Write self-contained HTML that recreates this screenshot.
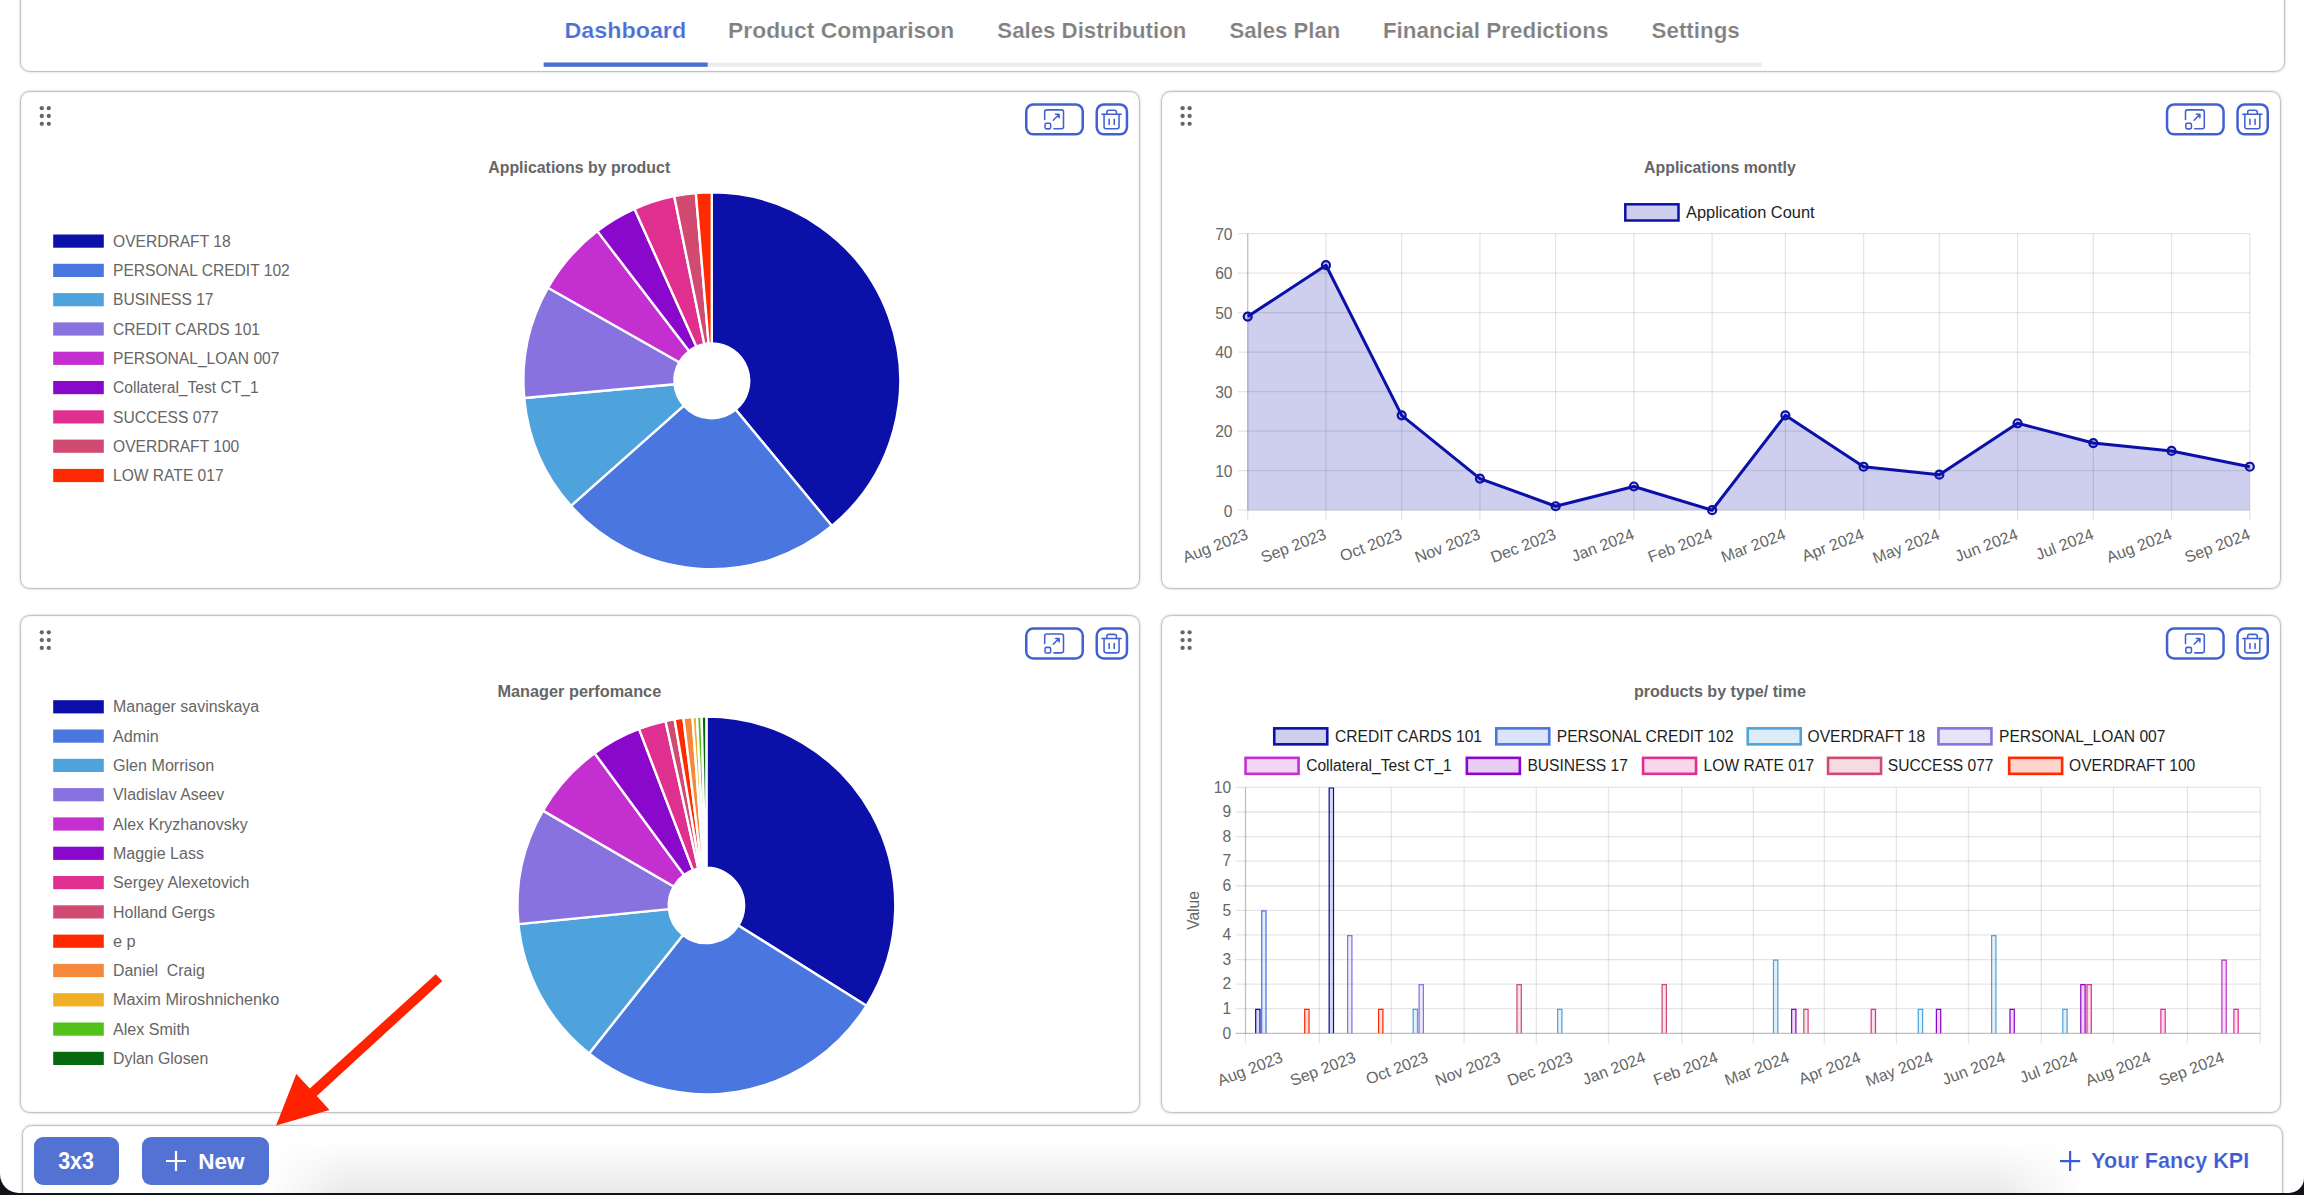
<!DOCTYPE html>
<html><head><meta charset="utf-8"><title>Dashboard</title>
<style>
html,body{margin:0;padding:0;}
body{width:2304px;height:1195px;overflow:hidden;background:#111318;position:relative;font-family:"Liberation Sans", sans-serif;}
.page{position:absolute;left:0;top:0;width:2304px;height:1193.3px;background:#fff;border-radius:0 0 15px 19px;overflow:hidden;}
.panel{position:absolute;box-sizing:border-box;border:1px solid #c2c2c2;border-radius:9.5px;box-shadow:0 0 3px rgba(0,0,0,0.2),inset 0 0 1.5px rgba(0,0,0,0.15);background:transparent;}
.shade{position:absolute;left:0;top:1140px;width:2304px;height:53px;background:linear-gradient(to bottom,rgba(0,0,0,0),rgba(0,0,0,0.085));
 -webkit-mask-image:linear-gradient(to right,transparent 11.5%,#000 15%,#000 86.5%,transparent 90.5%);}
.btn{position:absolute;top:1137.3px;height:47.4px;background:rgb(84,114,211);border-radius:9px;color:#fff;font-weight:700;font-size:22px;}
svg.layer{position:absolute;left:0;top:0;}
</style></head><body>
<div class="page">
<div class="shade"></div>
<div class="panel" style="left:20px;top:-30px;width:2265px;height:102px"></div><div class="panel" style="left:20px;top:91px;width:1120px;height:498px"></div><div class="panel" style="left:1161px;top:91px;width:1120px;height:498px"></div><div class="panel" style="left:20px;top:615px;width:1120px;height:498px"></div><div class="panel" style="left:1161px;top:615px;width:1120px;height:498px"></div><div class="panel" style="left:22px;top:1125px;width:2261px;height:116px"></div>
<div class="btn" style="left:34.2px;width:84.4px"></div>
<div class="btn" style="left:142px;width:126.8px"></div>
<svg class="layer" width="2304" height="1195" viewBox="0 0 2304 1195" font-family='"Liberation Sans", sans-serif'>
<text x="564.4" y="38.3" font-size="22.5" font-weight="700" fill="rgb(74,111,216)" stroke="#fff" stroke-width="0.2" textLength="121.8" lengthAdjust="spacingAndGlyphs">Dashboard</text>
<text x="728" y="38.3" font-size="22.5" font-weight="700" fill="rgb(128,128,128)" stroke="#fff" stroke-width="0.2" textLength="226.3" lengthAdjust="spacingAndGlyphs">Product Comparison</text>
<text x="997.3" y="38.3" font-size="22.5" font-weight="700" fill="rgb(128,128,128)" stroke="#fff" stroke-width="0.2" textLength="189.1" lengthAdjust="spacingAndGlyphs">Sales Distribution</text>
<text x="1229.4" y="38.3" font-size="22.5" font-weight="700" fill="rgb(128,128,128)" stroke="#fff" stroke-width="0.2" textLength="110.9" lengthAdjust="spacingAndGlyphs">Sales Plan</text>
<text x="1382.9" y="38.3" font-size="22.5" font-weight="700" fill="rgb(128,128,128)" stroke="#fff" stroke-width="0.2" textLength="225.5" lengthAdjust="spacingAndGlyphs">Financial Predictions</text>
<text x="1651.6" y="38.3" font-size="22.5" font-weight="700" fill="rgb(128,128,128)" stroke="#fff" stroke-width="0.2" textLength="88.1" lengthAdjust="spacingAndGlyphs">Settings</text>
<rect x="543.7" y="62.7" width="1218" height="4" fill="#ebebeb"/>
<rect x="543.7" y="62.5" width="164" height="4.3" fill="rgb(74,111,216)"/>
<circle cx="41.8" cy="108.2" r="2.15" fill="#666"/>
<circle cx="41.8" cy="116" r="2.15" fill="#666"/>
<circle cx="41.8" cy="123.8" r="2.15" fill="#666"/>
<circle cx="48.8" cy="108.2" r="2.15" fill="#666"/>
<circle cx="48.8" cy="116" r="2.15" fill="#666"/>
<circle cx="48.8" cy="123.8" r="2.15" fill="#666"/>
<circle cx="1182.6" cy="108.2" r="2.15" fill="#666"/>
<circle cx="1182.6" cy="116" r="2.15" fill="#666"/>
<circle cx="1182.6" cy="123.8" r="2.15" fill="#666"/>
<circle cx="1189.6" cy="108.2" r="2.15" fill="#666"/>
<circle cx="1189.6" cy="116" r="2.15" fill="#666"/>
<circle cx="1189.6" cy="123.8" r="2.15" fill="#666"/>
<circle cx="41.8" cy="632.3" r="2.15" fill="#666"/>
<circle cx="41.8" cy="640.1" r="2.15" fill="#666"/>
<circle cx="41.8" cy="647.9" r="2.15" fill="#666"/>
<circle cx="48.8" cy="632.3" r="2.15" fill="#666"/>
<circle cx="48.8" cy="640.1" r="2.15" fill="#666"/>
<circle cx="48.8" cy="647.9" r="2.15" fill="#666"/>
<circle cx="1182.6" cy="632.3" r="2.15" fill="#666"/>
<circle cx="1182.6" cy="640.1" r="2.15" fill="#666"/>
<circle cx="1182.6" cy="647.9" r="2.15" fill="#666"/>
<circle cx="1189.6" cy="632.3" r="2.15" fill="#666"/>
<circle cx="1189.6" cy="640.1" r="2.15" fill="#666"/>
<circle cx="1189.6" cy="647.9" r="2.15" fill="#666"/>
<rect x="1096.75" y="104.45" width="30.2" height="29.9" rx="7" fill="none" stroke="rgb(66,97,209)" stroke-width="2.5"/>
<rect x="1026.25" y="104.45" width="56.5" height="29.9" rx="7" fill="none" stroke="rgb(66,97,209)" stroke-width="2.5"/>
<g fill="none" stroke="rgb(66,97,209)" stroke-width="1.55" stroke-linecap="round" stroke-linejoin="round"><path d="M1044.7 119.5 V111.85 a2 2 0 0 1 2 -2 H1061.5 a2 2 0 0 1 2 2 V126.75 a2 2 0 0 1 -2 2 H1053.9"/><rect x="1045.05" y="123.25" width="5.6" height="5.6" rx="1.3"/><path d="M1053.3 120.2 L1058.9 114.5 M1055.6 114.3 H1059.1 V117.8"/></g>
<g fill="none" stroke="rgb(66,97,209)" stroke-width="1.55" stroke-linecap="round" stroke-linejoin="round"><path d="M1101.95 114.3 H1121.15"/><path d="M1104.05 114.3 V126.75 a2 2 0 0 0 2 2 H1117.05 a2 2 0 0 0 2 -2 V114.3"/><path d="M1106.85 114.3 V112.25 a2 2 0 0 1 2 -2 H1114.45 a2 2 0 0 1 2 2 V114.3"/><path d="M1109.15 119.3 V124.4 M1114.25 119.3 V124.4"/></g>
<rect x="2237.55" y="104.45" width="30.2" height="29.9" rx="7" fill="none" stroke="rgb(66,97,209)" stroke-width="2.5"/>
<rect x="2167.05" y="104.45" width="56.5" height="29.9" rx="7" fill="none" stroke="rgb(66,97,209)" stroke-width="2.5"/>
<g fill="none" stroke="rgb(66,97,209)" stroke-width="1.55" stroke-linecap="round" stroke-linejoin="round"><path d="M2185.5 119.5 V111.85 a2 2 0 0 1 2 -2 H2202.3 a2 2 0 0 1 2 2 V126.75 a2 2 0 0 1 -2 2 H2194.7"/><rect x="2185.85" y="123.25" width="5.6" height="5.6" rx="1.3"/><path d="M2194.1 120.2 L2199.7 114.5 M2196.4 114.3 H2199.9 V117.8"/></g>
<g fill="none" stroke="rgb(66,97,209)" stroke-width="1.55" stroke-linecap="round" stroke-linejoin="round"><path d="M2242.75 114.3 H2261.95"/><path d="M2244.85 114.3 V126.75 a2 2 0 0 0 2 2 H2257.85 a2 2 0 0 0 2 -2 V114.3"/><path d="M2247.65 114.3 V112.25 a2 2 0 0 1 2 -2 H2255.25 a2 2 0 0 1 2 2 V114.3"/><path d="M2249.95 119.3 V124.4 M2255.05 119.3 V124.4"/></g>
<rect x="1096.75" y="628.55" width="30.2" height="29.9" rx="7" fill="none" stroke="rgb(66,97,209)" stroke-width="2.5"/>
<rect x="1026.25" y="628.55" width="56.5" height="29.9" rx="7" fill="none" stroke="rgb(66,97,209)" stroke-width="2.5"/>
<g fill="none" stroke="rgb(66,97,209)" stroke-width="1.55" stroke-linecap="round" stroke-linejoin="round"><path d="M1044.7 643.6 V635.95 a2 2 0 0 1 2 -2 H1061.5 a2 2 0 0 1 2 2 V650.85 a2 2 0 0 1 -2 2 H1053.9"/><rect x="1045.05" y="647.35" width="5.6" height="5.6" rx="1.3"/><path d="M1053.3 644.3 L1058.9 638.6 M1055.6 638.4 H1059.1 V641.9"/></g>
<g fill="none" stroke="rgb(66,97,209)" stroke-width="1.55" stroke-linecap="round" stroke-linejoin="round"><path d="M1101.95 638.4 H1121.15"/><path d="M1104.05 638.4 V650.85 a2 2 0 0 0 2 2 H1117.05 a2 2 0 0 0 2 -2 V638.4"/><path d="M1106.85 638.4 V636.35 a2 2 0 0 1 2 -2 H1114.45 a2 2 0 0 1 2 2 V638.4"/><path d="M1109.15 643.4 V648.5 M1114.25 643.4 V648.5"/></g>
<rect x="2237.55" y="628.55" width="30.2" height="29.9" rx="7" fill="none" stroke="rgb(66,97,209)" stroke-width="2.5"/>
<rect x="2167.05" y="628.55" width="56.5" height="29.9" rx="7" fill="none" stroke="rgb(66,97,209)" stroke-width="2.5"/>
<g fill="none" stroke="rgb(66,97,209)" stroke-width="1.55" stroke-linecap="round" stroke-linejoin="round"><path d="M2185.5 643.6 V635.95 a2 2 0 0 1 2 -2 H2202.3 a2 2 0 0 1 2 2 V650.85 a2 2 0 0 1 -2 2 H2194.7"/><rect x="2185.85" y="647.35" width="5.6" height="5.6" rx="1.3"/><path d="M2194.1 644.3 L2199.7 638.6 M2196.4 638.4 H2199.9 V641.9"/></g>
<g fill="none" stroke="rgb(66,97,209)" stroke-width="1.55" stroke-linecap="round" stroke-linejoin="round"><path d="M2242.75 638.4 H2261.95"/><path d="M2244.85 638.4 V650.85 a2 2 0 0 0 2 2 H2257.85 a2 2 0 0 0 2 -2 V638.4"/><path d="M2247.65 638.4 V636.35 a2 2 0 0 1 2 -2 H2255.25 a2 2 0 0 1 2 2 V638.4"/><path d="M2249.95 643.4 V648.5 M2255.05 643.4 V648.5"/></g>
<text x="488.2" y="173" font-size="15.7" font-weight="700" fill="#666" textLength="182" lengthAdjust="spacingAndGlyphs">Applications by product</text>
<text x="1644" y="173" font-size="15.7" font-weight="700" fill="#666" textLength="151.8" lengthAdjust="spacingAndGlyphs">Applications montly</text>
<text x="497.5" y="697.4" font-size="15.7" font-weight="700" fill="#666" textLength="163.7" lengthAdjust="spacingAndGlyphs">Manager perfomance</text>
<text x="1633.9" y="697.4" font-size="15.7" font-weight="700" fill="#666" textLength="172" lengthAdjust="spacingAndGlyphs">products by type/ time</text>
<path d="M711.8 192.4 A188.4 188.4 0 0 1 831.89 525.96 L735.64 409.62 A37.4 37.4 0 0 0 711.8 343.4 Z" fill="rgb(10,16,168)" stroke="#fff" stroke-width="2.4" stroke-linejoin="bevel"/>
<path d="M831.89 525.96 A188.4 188.4 0 0 1 570.91 505.88 L683.83 405.63 A37.4 37.4 0 0 0 735.64 409.62 Z" fill="rgb(74,118,224)" stroke="#fff" stroke-width="2.4" stroke-linejoin="bevel"/>
<path d="M570.91 505.88 A188.4 188.4 0 0 1 524.19 398.04 L674.56 384.22 A37.4 37.4 0 0 0 683.83 405.63 Z" fill="rgb(79,163,220)" stroke="#fff" stroke-width="2.4" stroke-linejoin="bevel"/>
<path d="M524.19 398.04 A188.4 188.4 0 0 1 547.99 287.74 L679.28 362.33 A37.4 37.4 0 0 0 674.56 384.22 Z" fill="rgb(136,114,224)" stroke="#fff" stroke-width="2.4" stroke-linejoin="bevel"/>
<path d="M547.99 287.74 A188.4 188.4 0 0 1 597.37 231.13 L689.08 351.09 A37.4 37.4 0 0 0 679.28 362.33 Z" fill="rgb(195,48,207)" stroke="#fff" stroke-width="2.4" stroke-linejoin="bevel"/>
<path d="M597.37 231.13 A188.4 188.4 0 0 1 634.57 208.96 L696.47 346.69 A37.4 37.4 0 0 0 689.08 351.09 Z" fill="rgb(138,7,204)" stroke="#fff" stroke-width="2.4" stroke-linejoin="bevel"/>
<path d="M634.57 208.96 A188.4 188.4 0 0 1 674.24 196.18 L704.34 344.15 A37.4 37.4 0 0 0 696.47 346.69 Z" fill="rgb(224,48,143)" stroke="#fff" stroke-width="2.4" stroke-linejoin="bevel"/>
<path d="M674.24 196.18 A188.4 188.4 0 0 1 695.87 193.07 L708.64 343.53 A37.4 37.4 0 0 0 704.34 344.15 Z" fill="rgb(209,74,114)" stroke="#fff" stroke-width="2.4" stroke-linejoin="bevel"/>
<path d="M695.87 193.07 A188.4 188.4 0 0 1 711.8 192.4 L711.8 343.4 A37.4 37.4 0 0 0 708.64 343.53 Z" fill="rgb(255,42,0)" stroke="#fff" stroke-width="2.4" stroke-linejoin="bevel"/>
<path d="M706.4 716.5 A188.9 188.9 0 0 1 866.42 1005.78 L738.34 925.43 A37.7 37.7 0 0 0 706.4 867.7 Z" fill="rgb(10,16,168)" stroke="#fff" stroke-width="2.4" stroke-linejoin="bevel"/>
<path d="M866.42 1005.78 A188.9 188.9 0 0 1 589.07 1053.44 L682.98 934.95 A37.7 37.7 0 0 0 738.34 925.43 Z" fill="rgb(74,118,224)" stroke="#fff" stroke-width="2.4" stroke-linejoin="bevel"/>
<path d="M589.07 1053.44 A188.9 188.9 0 0 1 518.43 924.16 L668.89 909.14 A37.7 37.7 0 0 0 682.98 934.95 Z" fill="rgb(79,163,220)" stroke="#fff" stroke-width="2.4" stroke-linejoin="bevel"/>
<path d="M518.43 924.16 A188.9 188.9 0 0 1 542.97 810.66 L673.78 886.49 A37.7 37.7 0 0 0 668.89 909.14 Z" fill="rgb(136,114,224)" stroke="#fff" stroke-width="2.4" stroke-linejoin="bevel"/>
<path d="M542.97 810.66 A188.9 188.9 0 0 1 594.57 753.16 L684.08 875.02 A37.7 37.7 0 0 0 673.78 886.49 Z" fill="rgb(195,48,207)" stroke="#fff" stroke-width="2.4" stroke-linejoin="bevel"/>
<path d="M594.57 753.16 A188.9 188.9 0 0 1 639.01 728.93 L692.95 870.18 A37.7 37.7 0 0 0 684.08 875.02 Z" fill="rgb(138,7,204)" stroke="#fff" stroke-width="2.4" stroke-linejoin="bevel"/>
<path d="M639.01 728.93 A188.9 188.9 0 0 1 665.51 720.98 L698.24 868.59 A37.7 37.7 0 0 0 692.95 870.18 Z" fill="rgb(224,48,143)" stroke="#fff" stroke-width="2.4" stroke-linejoin="bevel"/>
<path d="M665.51 720.98 A188.9 188.9 0 0 1 674.57 719.2 L700.05 868.24 A37.7 37.7 0 0 0 698.24 868.59 Z" fill="rgb(209,74,114)" stroke="#fff" stroke-width="2.4" stroke-linejoin="bevel"/>
<path d="M674.57 719.2 A188.9 188.9 0 0 1 683.38 717.91 L701.81 867.98 A37.7 37.7 0 0 0 700.05 868.24 Z" fill="rgb(255,42,0)" stroke="#fff" stroke-width="2.4" stroke-linejoin="bevel"/>
<path d="M683.38 717.91 A188.9 188.9 0 0 1 692.4 717.02 L703.61 867.8 A37.7 37.7 0 0 0 701.81 867.98 Z" fill="rgb(245,136,58)" stroke="#fff" stroke-width="2.4" stroke-linejoin="bevel"/>
<path d="M692.4 717.02 A188.9 188.9 0 0 1 697.01 716.73 L704.53 867.75 A37.7 37.7 0 0 0 703.61 867.8 Z" fill="rgb(240,176,37)" stroke="#fff" stroke-width="2.4" stroke-linejoin="bevel"/>
<path d="M697.01 716.73 A188.9 188.9 0 0 1 701.62 716.56 L705.45 867.71 A37.7 37.7 0 0 0 704.53 867.75 Z" fill="rgb(82,194,26)" stroke="#fff" stroke-width="2.4" stroke-linejoin="bevel"/>
<path d="M701.62 716.56 A188.9 188.9 0 0 1 706.4 716.5 L706.4 867.7 A37.7 37.7 0 0 0 705.45 867.71 Z" fill="rgb(7,105,15)" stroke="#fff" stroke-width="2.4" stroke-linejoin="bevel"/>
<rect x="53.2" y="234.5" width="50.6" height="13.2" fill="rgb(10,16,168)"/>
<text x="113" y="246.7" font-size="15.6" fill="#666">OVERDRAFT 18</text>
<rect x="53.2" y="263.8" width="50.6" height="13.2" fill="rgb(74,118,224)"/>
<text x="113" y="276" font-size="15.6" fill="#666">PERSONAL CREDIT 102</text>
<rect x="53.2" y="293.1" width="50.6" height="13.2" fill="rgb(79,163,220)"/>
<text x="113" y="305.3" font-size="15.6" fill="#666">BUSINESS 17</text>
<rect x="53.2" y="322.4" width="50.6" height="13.2" fill="rgb(136,114,224)"/>
<text x="113" y="334.6" font-size="15.6" fill="#666">CREDIT CARDS 101</text>
<rect x="53.2" y="351.7" width="50.6" height="13.2" fill="rgb(195,48,207)"/>
<text x="113" y="363.9" font-size="15.6" fill="#666">PERSONAL_LOAN 007</text>
<rect x="53.2" y="381" width="50.6" height="13.2" fill="rgb(138,7,204)"/>
<text x="113" y="393.2" font-size="15.6" fill="#666">Collateral_Test CT_1</text>
<rect x="53.2" y="410.3" width="50.6" height="13.2" fill="rgb(224,48,143)"/>
<text x="113" y="422.5" font-size="15.6" fill="#666">SUCCESS 077</text>
<rect x="53.2" y="439.6" width="50.6" height="13.2" fill="rgb(209,74,114)"/>
<text x="113" y="451.8" font-size="15.6" fill="#666">OVERDRAFT 100</text>
<rect x="53.2" y="468.9" width="50.6" height="13.2" fill="rgb(255,42,0)"/>
<text x="113" y="481.1" font-size="15.6" fill="#666">LOW RATE 017</text>
<rect x="53.2" y="700.2" width="50.6" height="13.2" fill="rgb(10,16,168)"/>
<text x="113" y="712.4" font-size="15.6" fill="#666" textLength="146.2" lengthAdjust="spacingAndGlyphs">Manager savinskaya</text>
<rect x="53.2" y="729.5" width="50.6" height="13.2" fill="rgb(74,118,224)"/>
<text x="113" y="741.7" font-size="15.6" fill="#666" textLength="45.8" lengthAdjust="spacingAndGlyphs">Admin</text>
<rect x="53.2" y="758.8" width="50.6" height="13.2" fill="rgb(79,163,220)"/>
<text x="113" y="771" font-size="15.6" fill="#666" textLength="101.1" lengthAdjust="spacingAndGlyphs">Glen Morrison</text>
<rect x="53.2" y="788.1" width="50.6" height="13.2" fill="rgb(136,114,224)"/>
<text x="113" y="800.3" font-size="15.6" fill="#666" textLength="111.3" lengthAdjust="spacingAndGlyphs">Vladislav Aseev</text>
<rect x="53.2" y="817.4" width="50.6" height="13.2" fill="rgb(195,48,207)"/>
<text x="113" y="829.6" font-size="15.6" fill="#666" textLength="134.6" lengthAdjust="spacingAndGlyphs">Alex Kryzhanovsky</text>
<rect x="53.2" y="846.7" width="50.6" height="13.2" fill="rgb(138,7,204)"/>
<text x="113" y="858.9" font-size="15.6" fill="#666" textLength="91" lengthAdjust="spacingAndGlyphs">Maggie Lass</text>
<rect x="53.2" y="876" width="50.6" height="13.2" fill="rgb(224,48,143)"/>
<text x="113" y="888.2" font-size="15.6" fill="#666" textLength="136.5" lengthAdjust="spacingAndGlyphs">Sergey Alexetovich</text>
<rect x="53.2" y="905.3" width="50.6" height="13.2" fill="rgb(209,74,114)"/>
<text x="113" y="917.5" font-size="15.6" fill="#666" textLength="101.9" lengthAdjust="spacingAndGlyphs">Holland Gergs</text>
<rect x="53.2" y="934.6" width="50.6" height="13.2" fill="rgb(255,42,0)"/>
<text x="113" y="946.8" font-size="15.6" fill="#666" textLength="22.7" lengthAdjust="spacingAndGlyphs">e p</text>
<rect x="53.2" y="963.9" width="50.6" height="13.2" fill="rgb(245,136,58)"/>
<text x="113" y="976.1" font-size="15.6" fill="#666" textLength="91.8" lengthAdjust="spacingAndGlyphs">Daniel&#160; Craig</text>
<rect x="53.2" y="993.2" width="50.6" height="13.2" fill="rgb(240,176,37)"/>
<text x="113" y="1005.4" font-size="15.6" fill="#666" textLength="166.3" lengthAdjust="spacingAndGlyphs">Maxim Miroshnichenko</text>
<rect x="53.2" y="1022.5" width="50.6" height="13.2" fill="rgb(82,194,26)"/>
<text x="113" y="1034.7" font-size="15.6" fill="#666" textLength="76.8" lengthAdjust="spacingAndGlyphs">Alex Smith</text>
<rect x="53.2" y="1051.8" width="50.6" height="13.2" fill="rgb(7,105,15)"/>
<text x="113" y="1064" font-size="15.6" fill="#666" textLength="95.2" lengthAdjust="spacingAndGlyphs">Dylan Glosen</text>
<line x1="1237.7" y1="510.2" x2="2249.8" y2="510.2" stroke="rgba(0,0,0,0.1)" stroke-width="1.3"/>
<text x="1232.5" y="516.5" font-size="15.6" fill="#666" text-anchor="end">0</text>
<line x1="1237.7" y1="470.69" x2="2249.8" y2="470.69" stroke="rgba(0,0,0,0.1)" stroke-width="1.3"/>
<text x="1232.5" y="476.99" font-size="15.6" fill="#666" text-anchor="end">10</text>
<line x1="1237.7" y1="431.17" x2="2249.8" y2="431.17" stroke="rgba(0,0,0,0.1)" stroke-width="1.3"/>
<text x="1232.5" y="437.47" font-size="15.6" fill="#666" text-anchor="end">20</text>
<line x1="1237.7" y1="391.66" x2="2249.8" y2="391.66" stroke="rgba(0,0,0,0.1)" stroke-width="1.3"/>
<text x="1232.5" y="397.96" font-size="15.6" fill="#666" text-anchor="end">30</text>
<line x1="1237.7" y1="352.14" x2="2249.8" y2="352.14" stroke="rgba(0,0,0,0.1)" stroke-width="1.3"/>
<text x="1232.5" y="358.44" font-size="15.6" fill="#666" text-anchor="end">40</text>
<line x1="1237.7" y1="312.63" x2="2249.8" y2="312.63" stroke="rgba(0,0,0,0.1)" stroke-width="1.3"/>
<text x="1232.5" y="318.93" font-size="15.6" fill="#666" text-anchor="end">50</text>
<line x1="1237.7" y1="273.11" x2="2249.8" y2="273.11" stroke="rgba(0,0,0,0.1)" stroke-width="1.3"/>
<text x="1232.5" y="279.41" font-size="15.6" fill="#666" text-anchor="end">60</text>
<line x1="1237.7" y1="233.6" x2="2249.8" y2="233.6" stroke="rgba(0,0,0,0.1)" stroke-width="1.3"/>
<text x="1232.5" y="239.9" font-size="15.6" fill="#666" text-anchor="end">70</text>
<line x1="1247.7" y1="233.6" x2="1247.7" y2="520.2" stroke="rgba(0,0,0,0.1)" stroke-width="1.3"/>
<text x="1249.2" y="538.5" font-size="16" fill="#666" text-anchor="end" transform="rotate(-21 1249.2 538.5)">Aug 2023</text>
<line x1="1325.95" y1="233.6" x2="1325.95" y2="520.2" stroke="rgba(0,0,0,0.1)" stroke-width="1.3"/>
<text x="1327.45" y="538.5" font-size="16" fill="#666" text-anchor="end" transform="rotate(-21 1327.45 538.5)">Sep 2023</text>
<line x1="1401.68" y1="233.6" x2="1401.68" y2="520.2" stroke="rgba(0,0,0,0.1)" stroke-width="1.3"/>
<text x="1403.18" y="538.5" font-size="16" fill="#666" text-anchor="end" transform="rotate(-21 1403.18 538.5)">Oct 2023</text>
<line x1="1479.92" y1="233.6" x2="1479.92" y2="520.2" stroke="rgba(0,0,0,0.1)" stroke-width="1.3"/>
<text x="1481.42" y="538.5" font-size="16" fill="#666" text-anchor="end" transform="rotate(-21 1481.42 538.5)">Nov 2023</text>
<line x1="1555.65" y1="233.6" x2="1555.65" y2="520.2" stroke="rgba(0,0,0,0.1)" stroke-width="1.3"/>
<text x="1557.15" y="538.5" font-size="16" fill="#666" text-anchor="end" transform="rotate(-21 1557.15 538.5)">Dec 2023</text>
<line x1="1633.9" y1="233.6" x2="1633.9" y2="520.2" stroke="rgba(0,0,0,0.1)" stroke-width="1.3"/>
<text x="1635.4" y="538.5" font-size="16" fill="#666" text-anchor="end" transform="rotate(-21 1635.4 538.5)">Jan 2024</text>
<line x1="1712.15" y1="233.6" x2="1712.15" y2="520.2" stroke="rgba(0,0,0,0.1)" stroke-width="1.3"/>
<text x="1713.65" y="538.5" font-size="16" fill="#666" text-anchor="end" transform="rotate(-21 1713.65 538.5)">Feb 2024</text>
<line x1="1785.35" y1="233.6" x2="1785.35" y2="520.2" stroke="rgba(0,0,0,0.1)" stroke-width="1.3"/>
<text x="1786.85" y="538.5" font-size="16" fill="#666" text-anchor="end" transform="rotate(-21 1786.85 538.5)">Mar 2024</text>
<line x1="1863.6" y1="233.6" x2="1863.6" y2="520.2" stroke="rgba(0,0,0,0.1)" stroke-width="1.3"/>
<text x="1865.1" y="538.5" font-size="16" fill="#666" text-anchor="end" transform="rotate(-21 1865.1 538.5)">Apr 2024</text>
<line x1="1939.33" y1="233.6" x2="1939.33" y2="520.2" stroke="rgba(0,0,0,0.1)" stroke-width="1.3"/>
<text x="1940.83" y="538.5" font-size="16" fill="#666" text-anchor="end" transform="rotate(-21 1940.83 538.5)">May 2024</text>
<line x1="2017.58" y1="233.6" x2="2017.58" y2="520.2" stroke="rgba(0,0,0,0.1)" stroke-width="1.3"/>
<text x="2019.08" y="538.5" font-size="16" fill="#666" text-anchor="end" transform="rotate(-21 2019.08 538.5)">Jun 2024</text>
<line x1="2093.3" y1="233.6" x2="2093.3" y2="520.2" stroke="rgba(0,0,0,0.1)" stroke-width="1.3"/>
<text x="2094.8" y="538.5" font-size="16" fill="#666" text-anchor="end" transform="rotate(-21 2094.8 538.5)">Jul 2024</text>
<line x1="2171.55" y1="233.6" x2="2171.55" y2="520.2" stroke="rgba(0,0,0,0.1)" stroke-width="1.3"/>
<text x="2173.05" y="538.5" font-size="16" fill="#666" text-anchor="end" transform="rotate(-21 2173.05 538.5)">Aug 2024</text>
<line x1="2249.8" y1="233.6" x2="2249.8" y2="520.2" stroke="rgba(0,0,0,0.1)" stroke-width="1.3"/>
<text x="2251.3" y="538.5" font-size="16" fill="#666" text-anchor="end" transform="rotate(-21 2251.3 538.5)">Sep 2024</text>
<path d="M1247.7 316.58 L1325.95 265.21 L1401.68 415.37 L1479.92 478.59 L1555.65 506.25 L1633.9 486.49 L1712.15 510.2 L1785.35 415.37 L1863.6 466.73 L1939.33 474.64 L2017.58 423.27 L2093.3 443.03 L2171.55 450.93 L2249.8 466.73 L2249.8 510.2 L1247.7 510.2 Z" fill="rgba(10,16,168,0.2)"/>
<line x1="1247.7" y1="233.6" x2="1247.7" y2="510.2" stroke="rgba(0,0,0,0.16)" stroke-width="1.3"/>
<polyline points="1247.7,316.58 1325.95,265.21 1401.68,415.37 1479.92,478.59 1555.65,506.25 1633.9,486.49 1712.15,510.2 1785.35,415.37 1863.6,466.73 1939.33,474.64 2017.58,423.27 2093.3,443.03 2171.55,450.93 2249.8,466.73" fill="none" stroke="rgb(10,16,168)" stroke-width="3" stroke-linejoin="round"/>
<circle cx="1247.7" cy="316.58" r="4" fill="rgba(10,16,168,0.2)" stroke="rgb(10,16,168)" stroke-width="2.2"/>
<circle cx="1325.95" cy="265.21" r="4" fill="rgba(10,16,168,0.2)" stroke="rgb(10,16,168)" stroke-width="2.2"/>
<circle cx="1401.68" cy="415.37" r="4" fill="rgba(10,16,168,0.2)" stroke="rgb(10,16,168)" stroke-width="2.2"/>
<circle cx="1479.92" cy="478.59" r="4" fill="rgba(10,16,168,0.2)" stroke="rgb(10,16,168)" stroke-width="2.2"/>
<circle cx="1555.65" cy="506.25" r="4" fill="rgba(10,16,168,0.2)" stroke="rgb(10,16,168)" stroke-width="2.2"/>
<circle cx="1633.9" cy="486.49" r="4" fill="rgba(10,16,168,0.2)" stroke="rgb(10,16,168)" stroke-width="2.2"/>
<circle cx="1712.15" cy="510.2" r="4" fill="rgba(10,16,168,0.2)" stroke="rgb(10,16,168)" stroke-width="2.2"/>
<circle cx="1785.35" cy="415.37" r="4" fill="rgba(10,16,168,0.2)" stroke="rgb(10,16,168)" stroke-width="2.2"/>
<circle cx="1863.6" cy="466.73" r="4" fill="rgba(10,16,168,0.2)" stroke="rgb(10,16,168)" stroke-width="2.2"/>
<circle cx="1939.33" cy="474.64" r="4" fill="rgba(10,16,168,0.2)" stroke="rgb(10,16,168)" stroke-width="2.2"/>
<circle cx="2017.58" cy="423.27" r="4" fill="rgba(10,16,168,0.2)" stroke="rgb(10,16,168)" stroke-width="2.2"/>
<circle cx="2093.3" cy="443.03" r="4" fill="rgba(10,16,168,0.2)" stroke="rgb(10,16,168)" stroke-width="2.2"/>
<circle cx="2171.55" cy="450.93" r="4" fill="rgba(10,16,168,0.2)" stroke="rgb(10,16,168)" stroke-width="2.2"/>
<circle cx="2249.8" cy="466.73" r="4" fill="rgba(10,16,168,0.2)" stroke="rgb(10,16,168)" stroke-width="2.2"/>
<rect x="1625.3" y="204.3" width="53.2" height="16.2" fill="rgba(10,16,168,0.2)" stroke="rgb(10,16,168)" stroke-width="2.5"/>
<text x="1686" y="217.5" font-size="15.6" fill="#1e1e1e" textLength="128.6" lengthAdjust="spacingAndGlyphs">Application Count</text>
<line x1="1235.5" y1="1033.3" x2="2260.3" y2="1033.3" stroke="rgba(0,0,0,0.1)" stroke-width="1.3"/>
<text x="1231.2" y="1038.5" font-size="15.6" fill="#666" text-anchor="end">0</text>
<line x1="1235.5" y1="1008.71" x2="2260.3" y2="1008.71" stroke="rgba(0,0,0,0.1)" stroke-width="1.3"/>
<text x="1231.2" y="1013.91" font-size="15.6" fill="#666" text-anchor="end">1</text>
<line x1="1235.5" y1="984.12" x2="2260.3" y2="984.12" stroke="rgba(0,0,0,0.1)" stroke-width="1.3"/>
<text x="1231.2" y="989.32" font-size="15.6" fill="#666" text-anchor="end">2</text>
<line x1="1235.5" y1="959.53" x2="2260.3" y2="959.53" stroke="rgba(0,0,0,0.1)" stroke-width="1.3"/>
<text x="1231.2" y="964.73" font-size="15.6" fill="#666" text-anchor="end">3</text>
<line x1="1235.5" y1="934.94" x2="2260.3" y2="934.94" stroke="rgba(0,0,0,0.1)" stroke-width="1.3"/>
<text x="1231.2" y="940.14" font-size="15.6" fill="#666" text-anchor="end">4</text>
<line x1="1235.5" y1="910.35" x2="2260.3" y2="910.35" stroke="rgba(0,0,0,0.1)" stroke-width="1.3"/>
<text x="1231.2" y="915.55" font-size="15.6" fill="#666" text-anchor="end">5</text>
<line x1="1235.5" y1="885.76" x2="2260.3" y2="885.76" stroke="rgba(0,0,0,0.1)" stroke-width="1.3"/>
<text x="1231.2" y="890.96" font-size="15.6" fill="#666" text-anchor="end">6</text>
<line x1="1235.5" y1="861.17" x2="2260.3" y2="861.17" stroke="rgba(0,0,0,0.1)" stroke-width="1.3"/>
<text x="1231.2" y="866.37" font-size="15.6" fill="#666" text-anchor="end">7</text>
<line x1="1235.5" y1="836.58" x2="2260.3" y2="836.58" stroke="rgba(0,0,0,0.1)" stroke-width="1.3"/>
<text x="1231.2" y="841.78" font-size="15.6" fill="#666" text-anchor="end">8</text>
<line x1="1235.5" y1="811.99" x2="2260.3" y2="811.99" stroke="rgba(0,0,0,0.1)" stroke-width="1.3"/>
<text x="1231.2" y="817.19" font-size="15.6" fill="#666" text-anchor="end">9</text>
<line x1="1235.5" y1="787.4" x2="2260.3" y2="787.4" stroke="rgba(0,0,0,0.1)" stroke-width="1.3"/>
<text x="1231.2" y="792.6" font-size="15.6" fill="#666" text-anchor="end">10</text>
<line x1="1245.5" y1="787.4" x2="1245.5" y2="1043.3" stroke="rgba(0,0,0,0.1)" stroke-width="1.3"/>
<line x1="1319.4" y1="787.4" x2="1319.4" y2="1043.3" stroke="rgba(0,0,0,0.1)" stroke-width="1.3"/>
<line x1="1391.2" y1="787.4" x2="1391.2" y2="1043.3" stroke="rgba(0,0,0,0.1)" stroke-width="1.3"/>
<line x1="1464.1" y1="787.4" x2="1464.1" y2="1043.3" stroke="rgba(0,0,0,0.1)" stroke-width="1.3"/>
<line x1="1536.3" y1="787.4" x2="1536.3" y2="1043.3" stroke="rgba(0,0,0,0.1)" stroke-width="1.3"/>
<line x1="1608.5" y1="787.4" x2="1608.5" y2="1043.3" stroke="rgba(0,0,0,0.1)" stroke-width="1.3"/>
<line x1="1681.7" y1="787.4" x2="1681.7" y2="1043.3" stroke="rgba(0,0,0,0.1)" stroke-width="1.3"/>
<line x1="1753.3" y1="787.4" x2="1753.3" y2="1043.3" stroke="rgba(0,0,0,0.1)" stroke-width="1.3"/>
<line x1="1824.3" y1="787.4" x2="1824.3" y2="1043.3" stroke="rgba(0,0,0,0.1)" stroke-width="1.3"/>
<line x1="1896.4" y1="787.4" x2="1896.4" y2="1043.3" stroke="rgba(0,0,0,0.1)" stroke-width="1.3"/>
<line x1="1968.5" y1="787.4" x2="1968.5" y2="1043.3" stroke="rgba(0,0,0,0.1)" stroke-width="1.3"/>
<line x1="2041.2" y1="787.4" x2="2041.2" y2="1043.3" stroke="rgba(0,0,0,0.1)" stroke-width="1.3"/>
<line x1="2113.4" y1="787.4" x2="2113.4" y2="1043.3" stroke="rgba(0,0,0,0.1)" stroke-width="1.3"/>
<line x1="2187.4" y1="787.4" x2="2187.4" y2="1043.3" stroke="rgba(0,0,0,0.1)" stroke-width="1.3"/>
<line x1="2260.3" y1="787.4" x2="2260.3" y2="1043.3" stroke="rgba(0,0,0,0.1)" stroke-width="1.3"/>
<text x="1283.95" y="1061.6" font-size="16" fill="#666" text-anchor="end" transform="rotate(-21 1283.95 1061.6)">Aug 2023</text>
<text x="1356.8" y="1061.6" font-size="16" fill="#666" text-anchor="end" transform="rotate(-21 1356.8 1061.6)">Sep 2023</text>
<text x="1429.15" y="1061.6" font-size="16" fill="#666" text-anchor="end" transform="rotate(-21 1429.15 1061.6)">Oct 2023</text>
<text x="1501.7" y="1061.6" font-size="16" fill="#666" text-anchor="end" transform="rotate(-21 1501.7 1061.6)">Nov 2023</text>
<text x="1573.9" y="1061.6" font-size="16" fill="#666" text-anchor="end" transform="rotate(-21 1573.9 1061.6)">Dec 2023</text>
<text x="1646.6" y="1061.6" font-size="16" fill="#666" text-anchor="end" transform="rotate(-21 1646.6 1061.6)">Jan 2024</text>
<text x="1719" y="1061.6" font-size="16" fill="#666" text-anchor="end" transform="rotate(-21 1719 1061.6)">Feb 2024</text>
<text x="1790.3" y="1061.6" font-size="16" fill="#666" text-anchor="end" transform="rotate(-21 1790.3 1061.6)">Mar 2024</text>
<text x="1861.85" y="1061.6" font-size="16" fill="#666" text-anchor="end" transform="rotate(-21 1861.85 1061.6)">Apr 2024</text>
<text x="1933.95" y="1061.6" font-size="16" fill="#666" text-anchor="end" transform="rotate(-21 1933.95 1061.6)">May 2024</text>
<text x="2006.35" y="1061.6" font-size="16" fill="#666" text-anchor="end" transform="rotate(-21 2006.35 1061.6)">Jun 2024</text>
<text x="2078.8" y="1061.6" font-size="16" fill="#666" text-anchor="end" transform="rotate(-21 2078.8 1061.6)">Jul 2024</text>
<text x="2151.9" y="1061.6" font-size="16" fill="#666" text-anchor="end" transform="rotate(-21 2151.9 1061.6)">Aug 2024</text>
<text x="2225.35" y="1061.6" font-size="16" fill="#666" text-anchor="end" transform="rotate(-21 2225.35 1061.6)">Sep 2024</text>
<line x1="1245.5" y1="787.4" x2="1245.5" y2="1033.3" stroke="rgba(0,0,0,0.16)" stroke-width="1.3"/>
<line x1="1235.5" y1="1033.3" x2="2260.3" y2="1033.3" stroke="rgba(0,0,0,0.16)" stroke-width="1.3"/>
<text x="0" y="0" font-size="15.6" fill="#666" text-anchor="middle" transform="translate(1199 910.5) rotate(-90)">Value</text>
<rect x="1255.1" y="1008.71" width="5.5" height="24.59" fill="rgba(10,16,168,0.15)"/>
<path d="M1255.7 1033.3 V1009.31 H1260 V1033.3" fill="none" stroke="rgb(10,16,168)" stroke-width="1.2"/>
<rect x="1261.1" y="910.35" width="5.5" height="122.95" fill="rgba(74,118,224,0.15)"/>
<path d="M1261.7 1033.3 V910.95 H1266 V1033.3" fill="none" stroke="rgb(74,118,224)" stroke-width="1.2"/>
<rect x="1304.1" y="1008.71" width="5.5" height="24.59" fill="rgba(255,42,0,0.15)"/>
<path d="M1304.7 1033.3 V1009.31 H1309 V1033.3" fill="none" stroke="rgb(255,42,0)" stroke-width="1.2"/>
<rect x="1328.6" y="787.4" width="5.5" height="245.9" fill="rgba(10,16,168,0.15)"/>
<path d="M1329.2 1033.3 V788 H1333.5 V1033.3" fill="none" stroke="rgb(10,16,168)" stroke-width="1.2"/>
<rect x="1347" y="934.94" width="5.5" height="98.36" fill="rgba(136,114,224,0.15)"/>
<path d="M1347.6 1033.3 V935.54 H1351.9 V1033.3" fill="none" stroke="rgb(136,114,224)" stroke-width="1.2"/>
<rect x="1378" y="1008.71" width="5.5" height="24.59" fill="rgba(255,42,0,0.15)"/>
<path d="M1378.6 1033.3 V1009.31 H1382.9 V1033.3" fill="none" stroke="rgb(255,42,0)" stroke-width="1.2"/>
<rect x="1412.6" y="1008.71" width="5.5" height="24.59" fill="rgba(79,163,220,0.15)"/>
<path d="M1413.2 1033.3 V1009.31 H1417.5 V1033.3" fill="none" stroke="rgb(79,163,220)" stroke-width="1.2"/>
<rect x="1418.5" y="984.12" width="5.5" height="49.18" fill="rgba(136,114,224,0.15)"/>
<path d="M1419.1 1033.3 V984.72 H1423.4 V1033.3" fill="none" stroke="rgb(136,114,224)" stroke-width="1.2"/>
<rect x="1516.4" y="984.12" width="5.5" height="49.18" fill="rgba(209,74,114,0.15)"/>
<path d="M1517 1033.3 V984.72 H1521.3 V1033.3" fill="none" stroke="rgb(209,74,114)" stroke-width="1.2"/>
<rect x="1557" y="1008.71" width="5.5" height="24.59" fill="rgba(79,163,220,0.15)"/>
<path d="M1557.6 1033.3 V1009.31 H1561.9 V1033.3" fill="none" stroke="rgb(79,163,220)" stroke-width="1.2"/>
<rect x="1661.5" y="984.12" width="5.5" height="49.18" fill="rgba(209,74,114,0.15)"/>
<path d="M1662.1 1033.3 V984.72 H1666.4 V1033.3" fill="none" stroke="rgb(209,74,114)" stroke-width="1.2"/>
<rect x="1772.9" y="959.53" width="5.5" height="73.77" fill="rgba(79,163,220,0.15)"/>
<path d="M1773.5 1033.3 V960.13 H1777.8 V1033.3" fill="none" stroke="rgb(79,163,220)" stroke-width="1.2"/>
<rect x="1791" y="1008.71" width="5.5" height="24.59" fill="rgba(138,7,204,0.15)"/>
<path d="M1791.6 1033.3 V1009.31 H1795.9 V1033.3" fill="none" stroke="rgb(138,7,204)" stroke-width="1.2"/>
<rect x="1803.2" y="1008.71" width="5.5" height="24.59" fill="rgba(209,74,114,0.15)"/>
<path d="M1803.8 1033.3 V1009.31 H1808.1 V1033.3" fill="none" stroke="rgb(209,74,114)" stroke-width="1.2"/>
<rect x="1870.6" y="1008.71" width="5.5" height="24.59" fill="rgba(224,48,143,0.15)"/>
<path d="M1871.2 1033.3 V1009.31 H1875.5 V1033.3" fill="none" stroke="rgb(224,48,143)" stroke-width="1.2"/>
<rect x="1917.7" y="1008.71" width="5.5" height="24.59" fill="rgba(79,163,220,0.15)"/>
<path d="M1918.3 1033.3 V1009.31 H1922.6 V1033.3" fill="none" stroke="rgb(79,163,220)" stroke-width="1.2"/>
<rect x="1935.8" y="1008.71" width="5.5" height="24.59" fill="rgba(138,7,204,0.15)"/>
<path d="M1936.4 1033.3 V1009.31 H1940.7 V1033.3" fill="none" stroke="rgb(138,7,204)" stroke-width="1.2"/>
<rect x="1991" y="934.94" width="5.5" height="98.36" fill="rgba(79,163,220,0.15)"/>
<path d="M1991.6 1033.3 V935.54 H1995.9 V1033.3" fill="none" stroke="rgb(79,163,220)" stroke-width="1.2"/>
<rect x="2009.4" y="1008.71" width="5.5" height="24.59" fill="rgba(138,7,204,0.15)"/>
<path d="M2010 1033.3 V1009.31 H2014.3 V1033.3" fill="none" stroke="rgb(138,7,204)" stroke-width="1.2"/>
<rect x="2062.2" y="1008.71" width="5.5" height="24.59" fill="rgba(79,163,220,0.15)"/>
<path d="M2062.8 1033.3 V1009.31 H2067.1 V1033.3" fill="none" stroke="rgb(79,163,220)" stroke-width="1.2"/>
<rect x="2080.2" y="984.12" width="5.5" height="49.18" fill="rgba(138,7,204,0.15)"/>
<path d="M2080.8 1033.3 V984.72 H2085.1 V1033.3" fill="none" stroke="rgb(138,7,204)" stroke-width="1.2"/>
<rect x="2086.4" y="984.12" width="5.5" height="49.18" fill="rgba(224,48,143,0.15)"/>
<path d="M2087 1033.3 V984.72 H2091.3 V1033.3" fill="none" stroke="rgb(224,48,143)" stroke-width="1.2"/>
<rect x="2160.3" y="1008.71" width="5.5" height="24.59" fill="rgba(224,48,143,0.15)"/>
<path d="M2160.9 1033.3 V1009.31 H2165.2 V1033.3" fill="none" stroke="rgb(224,48,143)" stroke-width="1.2"/>
<rect x="2221.3" y="959.53" width="5.5" height="73.77" fill="rgba(195,48,207,0.15)"/>
<path d="M2221.9 1033.3 V960.13 H2226.2 V1033.3" fill="none" stroke="rgb(195,48,207)" stroke-width="1.2"/>
<rect x="2233.3" y="1008.71" width="5.5" height="24.59" fill="rgba(224,48,143,0.15)"/>
<path d="M2233.9 1033.3 V1009.31 H2238.2 V1033.3" fill="none" stroke="rgb(224,48,143)" stroke-width="1.2"/>
<rect x="1274.25" y="728.35" width="53" height="16" fill="rgba(10,16,168,0.2)" stroke="rgb(10,16,168)" stroke-width="2.6"/>
<text x="1335" y="741.8" font-size="15.6" fill="#1e1e1e">CREDIT CARDS 101</text>
<rect x="1496.25" y="728.35" width="53" height="16" fill="rgba(74,118,224,0.2)" stroke="rgb(74,118,224)" stroke-width="2.6"/>
<text x="1556.8" y="741.8" font-size="15.6" fill="#1e1e1e">PERSONAL CREDIT 102</text>
<rect x="1747.75" y="728.35" width="53" height="16" fill="rgba(79,163,220,0.2)" stroke="rgb(79,163,220)" stroke-width="2.6"/>
<text x="1807.6" y="741.8" font-size="15.6" fill="#1e1e1e">OVERDRAFT 18</text>
<rect x="1938.45" y="728.35" width="53" height="16" fill="rgba(136,114,224,0.2)" stroke="rgb(136,114,224)" stroke-width="2.6"/>
<text x="1999" y="741.8" font-size="15.6" fill="#1e1e1e">PERSONAL_LOAN 007</text>
<rect x="1245.55" y="757.85" width="53" height="16" fill="rgba(195,48,207,0.2)" stroke="rgb(195,48,207)" stroke-width="2.6"/>
<text x="1306.2" y="771.3" font-size="15.6" fill="#1e1e1e">Collateral_Test CT_1</text>
<rect x="1466.85" y="757.85" width="53" height="16" fill="rgba(138,7,204,0.2)" stroke="rgb(138,7,204)" stroke-width="2.6"/>
<text x="1527.4" y="771.3" font-size="15.6" fill="#1e1e1e">BUSINESS 17</text>
<rect x="1643.05" y="757.85" width="53" height="16" fill="rgba(224,48,143,0.2)" stroke="rgb(224,48,143)" stroke-width="2.6"/>
<text x="1703.6" y="771.3" font-size="15.6" fill="#1e1e1e">LOW RATE 017</text>
<rect x="1828.05" y="757.85" width="53" height="16" fill="rgba(209,74,114,0.2)" stroke="rgb(209,74,114)" stroke-width="2.6"/>
<text x="1887.8" y="771.3" font-size="15.6" fill="#1e1e1e">SUCCESS 077</text>
<rect x="2009.15" y="757.85" width="53" height="16" fill="rgba(255,42,0,0.2)" stroke="rgb(255,42,0)" stroke-width="2.6"/>
<text x="2069" y="771.3" font-size="15.6" fill="#1e1e1e">OVERDRAFT 100</text>
<polygon points="276.1,1125.4 296.3,1073.9 309.8,1088.6 435.7,974.2 442.3,980.9 316.8,1095.9 329.5,1110.1" fill="rgb(255,34,0)"/>
<text x="2091.2" y="1167.9" font-size="22" font-weight="700" fill="rgb(61,91,208)" stroke="#fff" stroke-width="0.2" textLength="158" lengthAdjust="spacingAndGlyphs">Your Fancy KPI</text>
<path d="M2060 1161.1 H2080.2 M2070.1 1151.1 V1171.1" stroke="rgb(61,91,208)" stroke-width="2.2"/>
<text x="58.2" y="1168.5" font-size="23" font-weight="700" fill="#fff" textLength="35.8" lengthAdjust="spacingAndGlyphs">3x3</text>
<path d="M166 1161 H186 M176 1151 V1171" stroke="#fff" stroke-width="2.2"/>
<text x="198.3" y="1168.6" font-size="22.3" font-weight="700" fill="#fff" textLength="46.2" lengthAdjust="spacingAndGlyphs">New</text>
</svg>
</div>
</body></html>
